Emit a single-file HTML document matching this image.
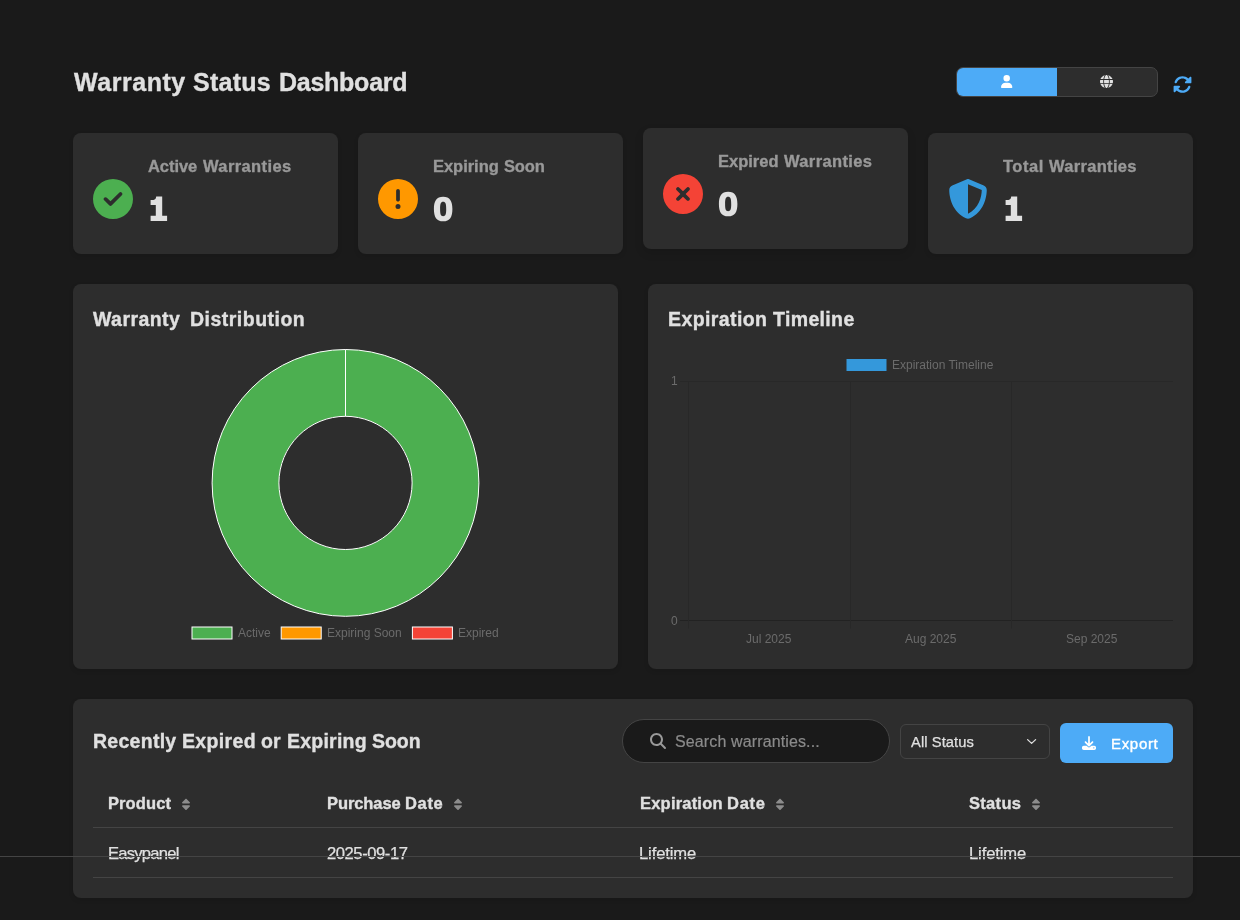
<!DOCTYPE html>
<html><head><meta charset="utf-8"><title>Warranty Status Dashboard</title>
<style>
*{box-sizing:border-box;margin:0;padding:0}
html,body{width:1240px;height:920px;overflow:hidden;background:#1a1a1a;font-family:"Liberation Sans",sans-serif;color:#e0e0e0}
.abs{position:absolute}
.card{position:absolute;background:#2d2d2d;border-radius:8px;box-shadow:0 2px 5px rgba(0,0,0,.1)}
.t{position:absolute;white-space:nowrap;line-height:1;transform-origin:0 0;will-change:transform}
svg{position:absolute;display:block;overflow:visible}
.ln{position:absolute;height:1px}
</style></head><body>
<div class="t" style="left:73.58px;top:70.00px;font-size:25px;color:#e0e0e0;font-weight:bold;-webkit-text-stroke:0.35px #e0e0e0;letter-spacing:0.542px;">Warranty</div>
<div class="t" style="left:193.18px;top:70.00px;font-size:25px;color:#e0e0e0;font-weight:bold;-webkit-text-stroke:0.35px #e0e0e0;letter-spacing:0.268px;">Status</div>
<div class="t" style="left:279.13px;top:70.00px;font-size:25px;color:#e0e0e0;font-weight:bold;-webkit-text-stroke:0.35px #e0e0e0;letter-spacing:-0.257px;">Dashboard</div>
<div class="abs" style="left:956px;top:67px;width:202px;height:30px;border:1px solid #444;border-radius:7px;background:#2d2d2d;overflow:hidden"><div class="abs" style="left:0;top:0;width:100px;height:28px;background:#4dabf7"></div></div>
<svg style="left:1000.90px;top:74.75px" width="11.38" height="13.00" viewBox="0 0 448 512"><path fill="#fff" fill-rule="evenodd" d="M224 256A128 128 0 1 0 224 0a128 128 0 1 0 0 256zm-45.700 48C79.800 304 0 383.800 0 482.300C0 498.700 13.300 512 29.700 512H418.300c16.400 0 29.700-13.300 29.700-29.700C448 383.800 368.200 304 269.700 304H178.300z"/></svg>
<svg style="left:1100.10px;top:74.70px" width="13.00" height="13.00" viewBox="0 0 512 512"><path fill="#e0e0e0" fill-rule="evenodd" d="M352 256c0 22.200-1.200 43.600-3.300 64H163.300c-2.200-20.400-3.300-41.800-3.300-64s1.200-43.600 3.300-64H348.700c2.200 20.400 3.300 41.800 3.300 64zm28.800-64H503.900c5.300 20.500 8.100 41.900 8.100 64s-2.800 43.500-8.100 64H380.800c2.100-20.600 3.200-42 3.200-64s-1.100-43.400-3.200-64zm112.600-32H376.700c-10-63.900-29.800-117.400-55.300-151.600c78.300 20.700 142 77.500 171.900 151.600zm-149.100 0H167.700c6.100-36.400 15.500-68.600 27-94.700c10.500-23.600 22.200-40.700 33.500-51.500C239.400 3.200 248.700 0 256 0s16.600 3.200 27.800 13.800c11.300 10.800 23 27.900 33.500 51.500c11.600 26 20.900 58.200 27 94.700zm-209 0H18.600C48.600 85.900 112.200 29.100 190.600 8.400C165.100 42.600 145.300 96.100 135.300 160zM8.100 192H131.200c-2.100 20.600-3.200 42-3.200 64s1.100 43.400 3.200 64H8.100C2.800 299.500 0 278.100 0 256s2.800-43.500 8.100-64zM194.700 446.600c-11.600-26-20.900-58.200-27-94.600H344.300c-6.100 36.400-15.500 68.600-27 94.600c-10.500 23.600-22.200 40.700-33.500 51.500C272.600 508.800 263.300 512 256 512s-16.600-3.200-27.800-13.800c-11.300-10.800-23-27.900-33.500-51.500zM135.300 352c10 63.900 29.800 117.400 55.300 151.600C112.200 482.900 48.600 426.100 18.600 352H135.300zm358.100 0c-30 74.100-93.600 130.900-171.900 151.600c25.500-34.200 45.200-87.700 55.300-151.600H493.400z"/></svg>
<svg style="left:1173.40px;top:75.20px" width="19.00" height="19.00" viewBox="0 0 512 512"><path fill="#4dabf7" fill-rule="evenodd" d="M142.900 142.900c62.200-62.200 162.700-62.500 225.300-1L327 183c-6.900 6.900-8.900 17.200-5.200 26.200s12.500 14.800 22.200 14.800H463.500c0 0 0 0 0 0H472c13.300 0 24-10.700 24-24V72c0-9.700-5.800-18.500-14.800-22.200s-19.300-1.700-26.200 5.200L413.400 96.600c-87.600-86.500-228.700-86.200-315.800 1C73.200 122 55.600 150.700 44.800 181.400c-5.900 16.700 2.900 34.900 19.500 40.800s34.900-2.900 40.800-19.500c7.700-21.800 20.200-42.300 37.800-59.800zM16 312v7.600 .7V440c0 9.700 5.800 18.500 14.800 22.200s19.300 1.700 26.200-5.200l41.600-41.600c87.600 86.500 228.700 86.200 315.800-1c24.400-24.400 42.100-53.100 52.900-83.700c5.900-16.700-2.900-34.900-19.500-40.800s-34.900 2.900-40.800 19.500c-7.700 21.800-20.200 42.300-37.800 59.800c-62.200 62.200-162.700 62.500-225.300 1L185 329c6.900-6.900 8.900-17.200 5.200-26.200s-12.500-14.800-22.200-14.800H48.400h-.7H40c-13.300 0-24 10.700-24 24z"/></svg>
<div class="card" style="left:73px;top:133px;width:265px;height:121px"></div>
<svg style="left:93.00px;top:178.75px" width="40.00" height="40.00" viewBox="0 0 512 512"><path fill="#4caf50" fill-rule="evenodd" d="M256 512A256 256 0 1 0 256 0a256 256 0 1 0 0 512zM369 209L241 337c-9.400 9.400-24.600 9.400-33.900 0l-64-64c-9.400-9.400-9.400-24.600 0-33.900s24.600-9.400 33.900 0l47 47L335 175c9.400-9.400 24.600-9.400 33.900 0s9.400 24.600 0 33.900z"/></svg>
<div class="t" style="left:148.19px;top:158.00px;font-size:16.5px;color:#999999;font-weight:bold;-webkit-text-stroke:0.35px #999999;letter-spacing:-0.070px;">Active</div>
<div class="t" style="left:202.78px;top:158.00px;font-size:16.5px;color:#999999;font-weight:bold;-webkit-text-stroke:0.35px #999999;letter-spacing:0.390px;">Warranties</div>
<svg style="left:0;top:0" width="1240" height="920"><path fill="#e0e0e0" d="M155.80 196.60H162.20V215.80H167.10V221.00H150.60V215.80H155.80V204.90H150.60V199.90H153.50Q156.00 199.70 156.20 196.60Z"/></svg>
<div class="card" style="left:358px;top:133px;width:265px;height:121px"></div>
<svg style="left:378.00px;top:178.75px" width="40.00" height="40.00" viewBox="0 0 512 512"><path fill="#ff9800" fill-rule="evenodd" d="M256 512A256 256 0 1 0 256 0a256 256 0 1 0 0 512zm0-384c13.300 0 24 10.700 24 24V264c0 13.300-10.700 24-24 24s-24-10.700-24-24V152c0-13.300 10.700-24 24-24zM224 352a32 32 0 1 1 64 0 32 32 0 1 1 -64 0z"/></svg>
<div class="t" style="left:433.10px;top:158.00px;font-size:16.5px;color:#999999;font-weight:bold;-webkit-text-stroke:0.35px #999999;letter-spacing:-0.029px;">Expiring</div>
<div class="t" style="left:503.82px;top:158.00px;font-size:16.5px;color:#999999;font-weight:bold;-webkit-text-stroke:0.35px #999999;letter-spacing:-0.148px;">Soon</div>
<svg style="left:0;top:0" width="1240" height="920"><path fill="#e0e0e0" fill-rule="evenodd" d="M443.15 196.70C449.90 196.70 452.40 201.00 452.40 209.00C452.40 217.00 449.90 221.35 443.15 221.35C436.40 221.35 433.90 217.00 433.90 209.00C433.90 201.00 436.40 196.70 443.15 196.70ZM443.15 201.70C440.70 201.70 440.10 204.00 440.10 209.00C440.10 214.00 440.70 216.20 443.15 216.20C445.60 216.20 446.20 214.00 446.20 209.00C446.20 204.00 445.60 201.70 443.15 201.70Z"/></svg>
<div class="card" style="left:643px;top:128px;width:265px;height:121px;box-shadow:0 4px 10px rgba(0,0,0,.12)"></div>
<svg style="left:663.00px;top:173.75px" width="40.00" height="40.00" viewBox="0 0 512 512"><path fill="#f44336" fill-rule="evenodd" d="M256 512A256 256 0 1 0 256 0a256 256 0 1 0 0 512zM175 175c9.400-9.400 24.600-9.400 33.900 0l47 47 47-47c9.400-9.400 24.600-9.400 33.900 0s9.400 24.600 0 33.900l-47 47 47 47c9.400 9.400 9.400 24.600 0 33.900s-24.600 9.400-33.900 0l-47-47-47 47c-9.400 9.400-24.600 9.400-33.900 0s-9.400-24.600 0-33.900l47-47-47-47c-9.400-9.400-9.400-24.600 0-33.900z"/></svg>
<div class="t" style="left:718.10px;top:153.00px;font-size:16.5px;color:#999999;font-weight:bold;-webkit-text-stroke:0.35px #999999;letter-spacing:-0.005px;">Expired</div>
<div class="t" style="left:783.88px;top:153.00px;font-size:16.5px;color:#999999;font-weight:bold;-webkit-text-stroke:0.35px #999999;letter-spacing:0.357px;">Warranties</div>
<svg style="left:0;top:0" width="1240" height="920"><path fill="#e0e0e0" fill-rule="evenodd" d="M728.15 191.70C734.90 191.70 737.40 196.00 737.40 204.00C737.40 212.00 734.90 216.35 728.15 216.35C721.40 216.35 718.90 212.00 718.90 204.00C718.90 196.00 721.40 191.70 728.15 191.70ZM728.15 196.70C725.70 196.70 725.10 199.00 725.10 204.00C725.10 209.00 725.70 211.20 728.15 211.20C730.60 211.20 731.20 209.00 731.20 204.00C731.20 199.00 730.60 196.70 728.15 196.70Z"/></svg>
<div class="card" style="left:928px;top:133px;width:265px;height:121px"></div>
<svg style="left:948.00px;top:178.75px" width="40.00" height="40.00" viewBox="0 0 512 512"><path fill="#3498db" fill-rule="evenodd" d="M256 0c4.600 0 9.200 1 13.400 2.900L457.700 82.800c22 9.300 38.400 31 38.300 57.200c-.5 99.200-41.300 280.700-213.600 363.200c-16.700 8-36.100 8-52.800 0C57.300 420.700 16.500 239.200 16 140c-.1-26.200 16.300-47.900 38.300-57.200L242.700 2.900C246.800 1 251.400 0 256 0zm0 66.800V444.800C394 378 431.100 230.100 432 141.400L256 66.800l0 0z"/></svg>
<div class="t" style="left:1003.01px;top:158.00px;font-size:16.5px;color:#999999;font-weight:bold;-webkit-text-stroke:0.35px #999999;letter-spacing:0.510px;">Total</div>
<div class="t" style="left:1049.08px;top:158.00px;font-size:16.5px;color:#999999;font-weight:bold;-webkit-text-stroke:0.35px #999999;letter-spacing:0.313px;">Warranties</div>
<svg style="left:0;top:0" width="1240" height="920"><path fill="#e0e0e0" d="M1010.80 196.60H1017.20V215.80H1022.10V221.00H1005.60V215.80H1010.80V204.90H1005.60V199.90H1008.50Q1011.00 199.70 1011.20 196.60Z"/></svg>
<div class="card" style="left:73px;top:284px;width:545px;height:385px"></div>
<div class="card" style="left:648px;top:284px;width:545px;height:385px"></div>
<div class="t" style="left:93.38px;top:310.00px;font-size:19.5px;color:#e0e0e0;font-weight:bold;-webkit-text-stroke:0.35px #e0e0e0;letter-spacing:0.443px;">Warranty</div>
<div class="t" style="left:189.50px;top:310.00px;font-size:19.5px;color:#e0e0e0;font-weight:bold;-webkit-text-stroke:0.35px #e0e0e0;letter-spacing:0.483px;">Distribution</div>
<div class="t" style="left:667.50px;top:310.00px;font-size:19.5px;color:#e0e0e0;font-weight:bold;-webkit-text-stroke:0.35px #e0e0e0;letter-spacing:0.396px;">Expiration</div>
<div class="t" style="left:773.28px;top:310.00px;font-size:19.5px;color:#e0e0e0;font-weight:bold;-webkit-text-stroke:0.35px #e0e0e0;letter-spacing:0.354px;">Timeline</div>
<svg style="left:0;top:0" width="1240" height="920" viewBox="0 0 1240 920"><circle cx="345.5" cy="482.9" r="100.0" fill="none" stroke="#4caf50" stroke-width="66.80000000000001"/><circle cx="345.5" cy="482.9" r="133.4" fill="none" stroke="#fff" stroke-width="1"/><circle cx="345.5" cy="482.9" r="66.6" fill="none" stroke="#fff" stroke-width="1"/><line x1="345.5" y1="349.5" x2="345.5" y2="416.29999999999995" stroke="#fff" stroke-width="1"/><rect x="192" y="627" width="40" height="12" fill="#4caf50" stroke="#fff" stroke-width="1"/><rect x="281.2" y="627" width="40" height="12" fill="#ff9800" stroke="#fff" stroke-width="1"/><rect x="412.4" y="627" width="40" height="12" fill="#f44336" stroke="#fff" stroke-width="1"/><rect x="846.5" y="359" width="40" height="12" fill="#3498db"/><g stroke="#282828" stroke-width="1" fill="none"><line x1="680" y1="381.5" x2="1173" y2="381.5"/><line x1="680" y1="620.5" x2="1173" y2="620.5" stroke="#222"/><line x1="688.5" y1="381" x2="688.5" y2="628.5"/><line x1="850.5" y1="381" x2="850.5" y2="628.5"/><line x1="1011.5" y1="381" x2="1011.5" y2="628.5"/></g></svg>
<div class="t" style="left:238.48px;top:627.00px;font-size:12px;color:#6b6b6b;">Active</div>
<div class="t" style="left:326.82px;top:627.00px;font-size:12px;color:#6b6b6b;">Expiring Soon</div>
<div class="t" style="left:458.02px;top:627.00px;font-size:12px;color:#6b6b6b;">Expired</div>
<div class="t" style="left:892.02px;top:359.00px;font-size:12px;color:#6b6b6b;">Expiration Timeline</div>
<div class="t" style="left:670.59px;top:375.00px;font-size:12px;color:#6b6b6b;">1</div>
<div class="t" style="left:670.83px;top:615.00px;font-size:12px;color:#6b6b6b;">0</div>
<div class="t" style="left:746.31px;top:633.00px;font-size:12px;color:#6b6b6b;">Jul 2025</div>
<div class="t" style="left:905.48px;top:633.00px;font-size:12px;color:#6b6b6b;">Aug 2025</div>
<div class="t" style="left:1065.96px;top:633.00px;font-size:12px;color:#6b6b6b;">Sep 2025</div>
<div class="card" style="left:73px;top:699px;width:1120px;height:199px"></div>
<div class="t" style="left:92.50px;top:732.00px;font-size:19.5px;color:#e0e0e0;font-weight:bold;-webkit-text-stroke:0.35px #e0e0e0;letter-spacing:0.275px;">Recently</div>
<div class="t" style="left:181.90px;top:732.00px;font-size:19.5px;color:#e0e0e0;font-weight:bold;-webkit-text-stroke:0.35px #e0e0e0;letter-spacing:0.361px;">Expired</div>
<div class="t" style="left:260.94px;top:732.00px;font-size:19.5px;color:#e0e0e0;font-weight:bold;-webkit-text-stroke:0.35px #e0e0e0;letter-spacing:0.157px;">or</div>
<div class="t" style="left:286.70px;top:732.00px;font-size:19.5px;color:#e0e0e0;font-weight:bold;-webkit-text-stroke:0.35px #e0e0e0;letter-spacing:0.228px;">Expiring</div>
<div class="t" style="left:372.04px;top:732.00px;font-size:19.5px;color:#e0e0e0;font-weight:bold;-webkit-text-stroke:0.35px #e0e0e0;letter-spacing:-0.056px;">Soon</div>
<div class="abs" style="left:622px;top:719px;width:268px;height:44px;border:1px solid #444;border-radius:22px;background:#1a1a1a"></div>
<svg style="left:649.50px;top:733.00px" width="16.00" height="16.00" viewBox="0 0 512 512"><path fill="#999" fill-rule="evenodd" d="M416 208c0 45.900-14.900 88.300-40 122.700L502.600 457.400c12.500 12.500 12.500 32.800 0 45.300s-32.800 12.500-45.300 0L330.700 376c-34.400 25.200-76.800 40-122.700 40C93.100 416 0 322.900 0 208S93.100 0 208 0S416 93.100 416 208zM208 352a144 144 0 1 0 0-288 144 144 0 1 0 0 288z"/></svg>
<div class="t" style="left:675.07px;top:734.00px;font-size:16px;color:#8a8a8a;letter-spacing:0.127px;-webkit-text-stroke:0.2px #8a8a8a;">Search warranties...</div>
<div class="abs" style="left:900px;top:724px;width:150px;height:35px;border:1px solid #444;border-radius:6px;background:#2d2d2d"></div>
<div class="t" style="left:910.77px;top:735.00px;font-size:14.7px;color:#e0e0e0;letter-spacing:0.096px;-webkit-text-stroke:0.25px #e0e0e0;">All Status</div>
<svg style="left:1026px;top:737px" width="12" height="9" viewBox="0 0 12 9"><path d="M1.6 2.6 L5.6 6.4 L9.6 2.6" fill="none" stroke="#e0e0e0" stroke-width="1.3" stroke-linecap="round" stroke-linejoin="round"/></svg>
<div class="abs" style="left:1060px;top:723px;width:113px;height:40px;border-radius:6px;background:#4dabf7"></div>
<svg style="left:1082.00px;top:735.80px" width="14.00" height="14.00" viewBox="0 0 512 512"><path fill="#fff" fill-rule="evenodd" d="M288 32c0-17.700-14.300-32-32-32s-32 14.300-32 32V274.700l-73.400-73.400c-12.500-12.500-32.800-12.500-45.300 0s-12.500 32.800 0 45.300l128 128c12.500 12.500 32.800 12.500 45.300 0l128-128c12.500-12.500 12.500-32.800 0-45.300s-32.800-12.500-45.300 0L288 274.700V32zM64 352c-35.300 0-64 28.700-64 64v32c0 35.300 28.700 64 64 64H448c35.300 0 64-28.700 64-64V416c0-35.300-28.700-64-64-64H346.500l-45.300 45.300c-25 25-65.500 25-90.500 0L165.500 352H64zm368 56a24 24 0 1 1 0 48 24 24 0 1 1 0-48z"/></svg>
<div class="t" style="left:1110.97px;top:736.00px;font-size:15px;color:#fff;letter-spacing:0.678px;-webkit-text-stroke:0.4px #fff;">Export</div>
<div class="t" style="left:107.80px;top:795.00px;font-size:16.5px;color:#e0e0e0;font-weight:bold;-webkit-text-stroke:0.35px #e0e0e0;letter-spacing:0.095px;">Product</div>
<svg style="left:181.80px;top:798.00px" width="8.00" height="12.80" viewBox="0 0 320 512"><path fill="#8c8c8c" fill-rule="evenodd" d="M137.400 41.400c12.500-12.500 32.800-12.500 45.300 0l128 128c9.200 9.200 11.900 22.900 6.900 34.900s-16.600 19.800-29.600 19.800H32c-12.900 0-24.600-7.800-29.600-19.800s-2.200-25.700 6.900-34.900l128-128zm0 429.300l-128-128c-9.200-9.200-11.900-22.900-6.900-34.900s16.600-19.800 29.600-19.800H288c12.900 0 24.600 7.800 29.600 19.800s2.200 25.700-6.900 34.900l-128 128c-12.500 12.500-32.800 12.500-45.300 0z"/></svg>
<div class="t" style="left:326.70px;top:795.00px;font-size:16.5px;color:#e0e0e0;font-weight:bold;-webkit-text-stroke:0.35px #e0e0e0;letter-spacing:-0.089px;">Purchase</div>
<div class="t" style="left:405.30px;top:795.00px;font-size:16.5px;color:#e0e0e0;font-weight:bold;-webkit-text-stroke:0.35px #e0e0e0;letter-spacing:0.668px;">Date</div>
<svg style="left:453.90px;top:798.00px" width="8.00" height="12.80" viewBox="0 0 320 512"><path fill="#8c8c8c" fill-rule="evenodd" d="M137.400 41.400c12.500-12.500 32.800-12.500 45.300 0l128 128c9.200 9.200 11.900 22.900 6.900 34.900s-16.600 19.800-29.600 19.800H32c-12.900 0-24.600-7.800-29.600-19.800s-2.200-25.700 6.900-34.900l128-128zm0 429.300l-128-128c-9.200-9.200-11.900-22.900-6.900-34.900s16.600-19.800 29.600-19.800H288c12.900 0 24.600 7.800 29.600 19.800s2.200 25.700-6.900 34.900l-128 128c-12.500 12.500-32.800 12.500-45.300 0z"/></svg>
<div class="t" style="left:639.60px;top:795.00px;font-size:16.5px;color:#e0e0e0;font-weight:bold;-webkit-text-stroke:0.35px #e0e0e0;letter-spacing:0.205px;">Expiration</div>
<div class="t" style="left:726.90px;top:795.00px;font-size:16.5px;color:#e0e0e0;font-weight:bold;-webkit-text-stroke:0.35px #e0e0e0;letter-spacing:0.735px;">Date</div>
<svg style="left:775.90px;top:798.00px" width="8.00" height="12.80" viewBox="0 0 320 512"><path fill="#8c8c8c" fill-rule="evenodd" d="M137.400 41.400c12.500-12.500 32.800-12.500 45.300 0l128 128c9.200 9.200 11.900 22.900 6.900 34.900s-16.600 19.800-29.600 19.800H32c-12.900 0-24.600-7.800-29.600-19.800s-2.200-25.700 6.900-34.900l128-128zm0 429.300l-128-128c-9.200-9.200-11.900-22.900-6.900-34.900s16.600-19.800 29.600-19.800H288c12.900 0 24.600 7.800 29.600 19.800s2.200 25.700-6.900 34.900l-128 128c-12.500 12.500-32.800 12.500-45.300 0z"/></svg>
<div class="t" style="left:968.72px;top:795.00px;font-size:16.5px;color:#e0e0e0;font-weight:bold;-webkit-text-stroke:0.35px #e0e0e0;letter-spacing:0.305px;">Status</div>
<svg style="left:1031.80px;top:798.00px" width="8.00" height="12.80" viewBox="0 0 320 512"><path fill="#8c8c8c" fill-rule="evenodd" d="M137.400 41.400c12.500-12.500 32.800-12.500 45.300 0l128 128c9.200 9.200 11.900 22.900 6.900 34.900s-16.600 19.800-29.600 19.800H32c-12.900 0-24.600-7.800-29.600-19.800s-2.200-25.700 6.900-34.900l128-128zm0 429.300l-128-128c-9.200-9.200-11.900-22.900-6.900-34.900s16.600-19.800 29.600-19.800H288c12.900 0 24.600 7.800 29.600 19.800s2.200 25.700-6.900 34.900l-128 128c-12.500 12.500-32.800 12.500-45.300 0z"/></svg>
<div class="ln" style="left:93px;top:827px;width:1080px;background:#444"></div>
<div class="ln" style="left:93px;top:877px;width:1080px;background:#444"></div>
<div class="t" style="left:107.84px;top:846.00px;font-size:16.6px;color:#e0e0e0;letter-spacing:-0.756px;-webkit-text-stroke:0.25px #e0e0e0;">Easypanel</div>
<div class="t" style="left:327.07px;top:846.00px;font-size:16.6px;color:#e0e0e0;letter-spacing:-0.438px;-webkit-text-stroke:0.25px #e0e0e0;">2025-09-17</div>
<div class="t" style="left:639.14px;top:846.00px;font-size:16.6px;color:#e0e0e0;letter-spacing:-0.118px;-webkit-text-stroke:0.25px #e0e0e0;">Lifetime</div>
<div class="t" style="left:968.54px;top:846.00px;font-size:16.6px;color:#e0e0e0;letter-spacing:-0.118px;-webkit-text-stroke:0.25px #e0e0e0;">Lifetime</div>
<div class="ln" style="left:0;top:856px;width:1240px;background:#444"></div>
</body></html>
